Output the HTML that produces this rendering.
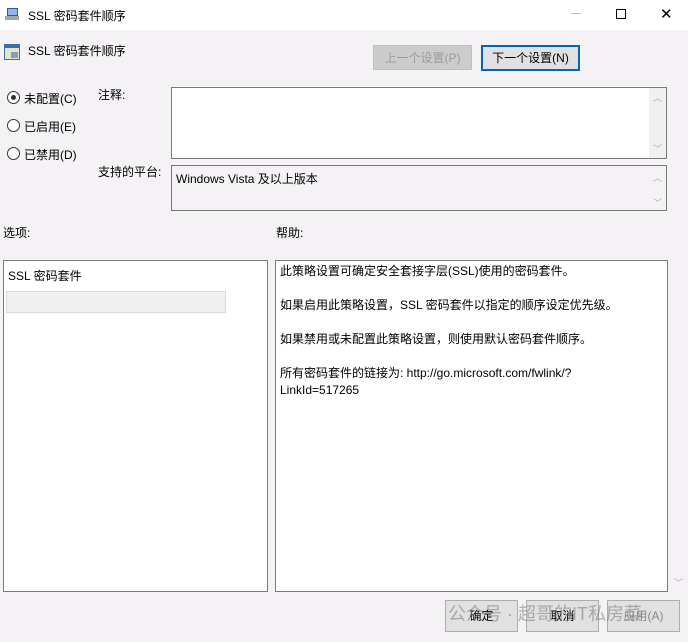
<!DOCTYPE html>
<html><head><meta charset="utf-8"><style>
*{margin:0;padding:0;box-sizing:border-box}
body{width:688px;height:642px;overflow:hidden;background:#f4f2f5;font-family:"Liberation Sans","Noto Sans CJK SC",sans-serif;font-size:12px;color:#000;position:relative}
.a{position:absolute;white-space:nowrap}
.box{position:absolute;border:1px solid #7a7a7a}
.btn{position:absolute;border:1px solid #adadad;background:#e1e1e1;text-align:center;line-height:24px}
.rad{position:absolute;width:13px;height:13px;border:1px solid #333;border-radius:50%;background:#fff}
.sb{position:absolute;color:#aaa;font-size:9px}
</style></head><body>
<div class="a" style="left:0;top:0;width:688px;height:30px;background:#fff"></div>
<svg class="a" style="left:5px;top:7px" width="16" height="14"><rect x="2" y="1" width="11" height="8" fill="#2b5aa8"/><rect x="3" y="2" width="9" height="6" fill="#8fb8e8"/><rect x="0" y="9" width="14" height="4" fill="#9aa"/></svg>
<div class="a" style="left:28px;top:7px">SSL 密码套件顺序</div>
<div class="a" style="left:571px;top:13px;width:10px;height:1px;background:#bbb"></div>
<div class="a" style="left:616px;top:9px;width:10px;height:10px;border:1px solid #000"></div>
<div class="a" style="left:660px;top:5px;font-size:15px">✕</div>
<svg class="a" style="left:4px;top:44px" width="16" height="16"><rect x="0" y="0" width="16" height="16" fill="#3b6fa8"/><rect x="1" y="4" width="14" height="11" fill="#e8e4c8"/><rect x="7" y="8" width="7" height="6" fill="#7aa0c8"/></svg>
<div class="a" style="left:28px;top:42px">SSL 密码套件顺序</div>
<div class="btn" style="left:373px;top:45px;width:99px;height:25px;background:#cccccc;border-color:#bfbfbf;color:#9a9a9a">上一个设置(P)</div>
<div class="btn" style="left:481px;top:45px;width:99px;height:26px;border:2px solid #0a64b4;line-height:22px">下一个设置(N)</div>
<div class="rad" style="left:7px;top:91px"><div style="position:absolute;left:3px;top:3px;width:5px;height:5px;border-radius:50%;background:#333"></div></div>
<div class="a" style="left:24px;top:90px">未配置(C)</div>
<div class="rad" style="left:7px;top:119px"></div>
<div class="a" style="left:24px;top:118px">已启用(E)</div>
<div class="rad" style="left:7px;top:147px"></div>
<div class="a" style="left:24px;top:146px">已禁用(D)</div>
<div class="a" style="left:98px;top:86px">注释:</div>
<div class="a" style="left:98px;top:163px">支持的平台:</div>
<div class="box" style="left:171px;top:87px;width:496px;height:72px;background:#fff"><div class="a" style="right:0;top:0;width:17px;height:70px;background:#f0f0f0"></div><div class="sb" style="right:4px;top:3px">︿</div><div class="sb" style="right:4px;top:54px">﹀</div></div>
<div class="box" style="left:171px;top:165px;width:496px;height:46px;background:#f4f2f5"><div class="a" style="left:4px;top:4px">Windows Vista 及以上版本</div><div class="sb" style="right:4px;top:5px">︿</div><div class="sb" style="right:4px;top:30px">﹀</div></div>
<div class="a" style="left:3px;top:224px">选项:</div>
<div class="a" style="left:276px;top:224px">帮助:</div>
<div class="box" style="left:3px;top:260px;width:265px;height:332px;background:#fff"><div class="a" style="left:4px;top:6px">SSL 密码套件</div><div class="a" style="left:2px;top:30px;width:220px;height:22px;background:#f0f0f0;border:1px solid #d9d9d9"></div></div>
<div class="box" style="left:275px;top:260px;width:393px;height:332px;background:#fff;line-height:17px">
<div class="a" style="left:4px;top:2px">此策略设置可确定安全套接字层(SSL)使用的密码套件。</div>
<div class="a" style="left:4px;top:36px">如果启用此策略设置，SSL 密码套件以指定的顺序设定优先级。</div>
<div class="a" style="left:4px;top:70px">如果禁用或未配置此策略设置，则使用默认密码套件顺序。</div>
<div class="a" style="left:4px;top:104px">所有密码套件的链接为: http://go.microsoft.com/fwlink/?</div>
<div class="a" style="left:4px;top:121px">LinkId=517265</div>
</div>
<div class="sb" style="left:674px;top:576px">﹀</div>
<div class="btn" style="left:445px;top:600px;width:73px;height:32px;line-height:30px">确定</div>
<div class="btn" style="left:526px;top:600px;width:73px;height:32px;line-height:30px">取消</div>
<div class="btn" style="left:607px;top:600px;width:73px;height:32px;line-height:30px;color:#888">应用(A)</div>
<div class="a" style="left:448px;top:600px;font-size:18px;color:rgba(120,120,120,.55)">公众号 · 超哥的IT私房菜</div>
</body></html>
